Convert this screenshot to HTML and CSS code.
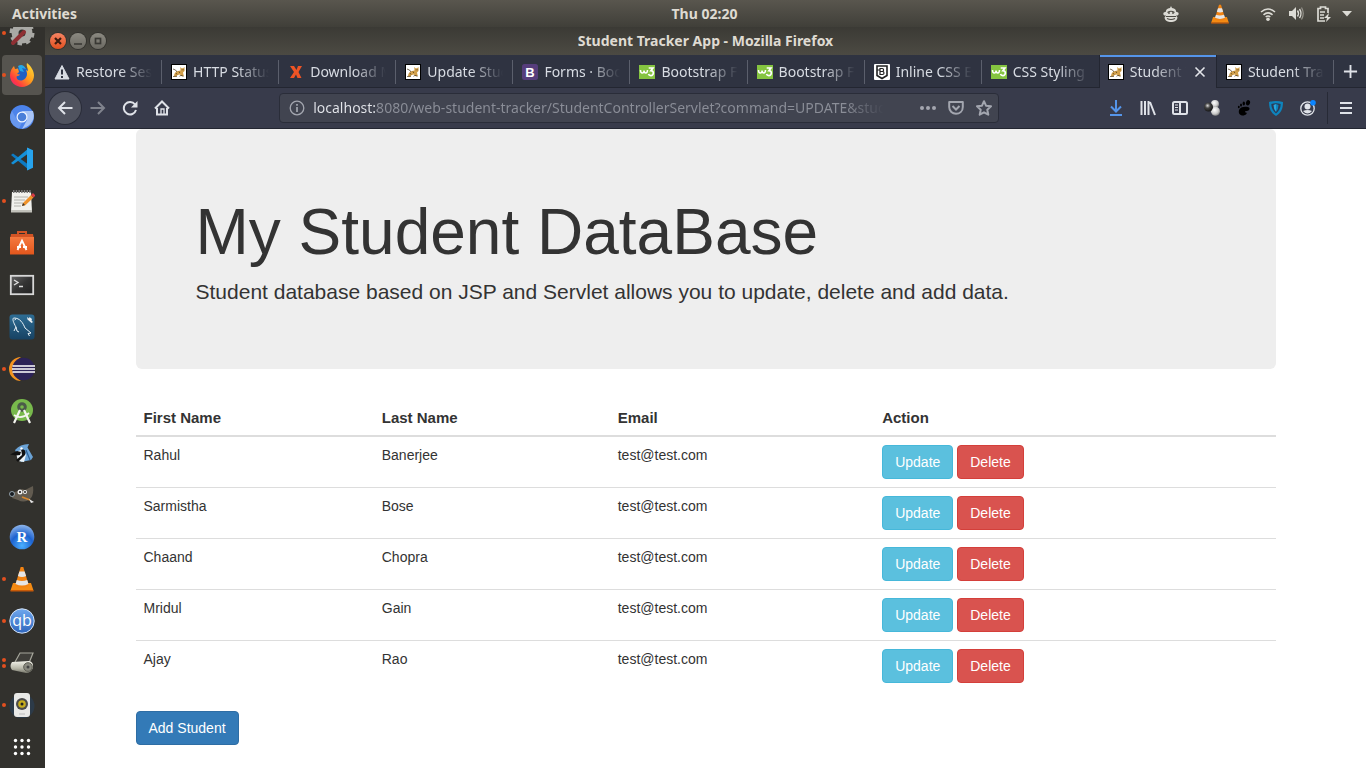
FILE: index.html
```html
<!DOCTYPE html>
<html lang="en">
<head>
<meta charset="utf-8">
<title>Student Tracker App</title>
<link rel="stylesheet" href="styles.css">
</head>
<body>
<svg class="defs" aria-hidden="true">
  <defs>
    <linearGradient id="ffOuter" x1="1" y1="0" x2="0" y2="1"><stop offset="0" stop-color="#ffe63c"/><stop offset=".45" stop-color="#ff9a1c"/><stop offset=".75" stop-color="#ff3d3f"/><stop offset="1" stop-color="#e8178a"/></linearGradient>
    <linearGradient id="orangeG" x1="0" y1="0" x2="0" y2="1"><stop offset="0" stop-color="#f5793f"/><stop offset="1" stop-color="#e2561c"/></linearGradient>
    <linearGradient id="termG" x1="0" y1="0" x2="1" y2="1"><stop offset="0" stop-color="#666"/><stop offset=".5" stop-color="#333"/><stop offset="1" stop-color="#222"/></linearGradient>
    <linearGradient id="blueG" x1="0" y1="0" x2="0" y2="1"><stop offset="0" stop-color="#2e6d94"/><stop offset="1" stop-color="#174263"/></linearGradient>
    <radialGradient id="rG" cx=".5" cy=".85" r=".9"><stop offset="0" stop-color="#4bb0ff"/><stop offset=".5" stop-color="#1d62cf"/><stop offset="1" stop-color="#9dc0ee"/></radialGradient>
    <linearGradient id="qbG" x1="0" y1="0" x2="0" y2="1"><stop offset="0" stop-color="#6fa8ee"/><stop offset="1" stop-color="#2f66bd"/></linearGradient>
    <linearGradient id="metal" x1="0" y1="0" x2="0" y2="1"><stop offset="0" stop-color="#f2f2ea"/><stop offset=".6" stop-color="#b9b9aa"/><stop offset="1" stop-color="#77776c"/></linearGradient>
    <radialGradient id="ballL" cx=".4" cy=".35" r=".7"><stop offset="0" stop-color="#fff"/><stop offset=".6" stop-color="#ccc"/><stop offset="1" stop-color="#777"/></radialGradient>
    <radialGradient id="ballD" cx=".4" cy=".35" r=".7"><stop offset="0" stop-color="#ddd"/><stop offset=".4" stop-color="#444"/><stop offset="1" stop-color="#111"/></radialGradient>
    <symbol id="tomcat" viewBox="0 0 16 16">
      <rect x=".5" y=".5" width="15" height="15" fill="#fff" stroke="#000"/>
      <path d="M3 12.500c0-3 1.500-5 4-5.500l2.500-.5-.3-3.500 1.300 1.200h1.500L13.500 3v4l-1.500 1.500.8 3.500-2.300.3L9 10.500l-2.500.5-1 1.500z" fill="#d3a04a"/>
      <path d="M2 12.500l4-.2M8.500 12.300l1.500-1 2.500 1M2 5l2.500 1L6 8M10.700 5.800h.9M12.300 5.800h.8M5 9l1 1.500M8 7.500l.8 1.500" stroke="#463418" stroke-width=".7" fill="none"/>
    </symbol>
    <symbol id="w3" viewBox="0 0 16 16">
      <rect y="1" width="16" height="14" fill="#85c440"/>
      <path d="M1.500 6q0 3 1.800 3T5 6.500Q5.200 9 6.800 9T8.500 6" fill="none" stroke="#fff" stroke-width="1.500"/>
      <path d="M9.700 4h4.200l-2 2.700c3.700.2 2.800 4.900-.1 4.900-1.300 0-2-.6-2.300-1.500" fill="none" stroke="#fff" stroke-width="1.700"/>
    </symbol>
    <symbol id="vlc" viewBox="0 0 26 26">
      <path d="M4 17h18l2.500 7.500h-23z" fill="#f48b13"/><path d="M1.500 24h23v1.500h-23z" fill="#c85a08"/>
      <path d="M11.700 1h2.600L20 20q-7 3.500-14 0z" fill="#f28312"/>
      <path d="M10.400 5.500h5.200l1.500 4.500q-4 2-8.200 0zM7.800 14q5 2 10.400 0l1.300 4q-6.500 3-13 0z" fill="#e5e5e5"/>
    </symbol>
  </defs>
</svg>

<div class="desktop">
  <header class="topbar">
    <button class="top-text">Activities</button>
    <time class="clock">Thu 02:20</time>
    <div class="tray">
      <svg class="tray-monkey" viewBox="0 0 18 18" width="18" height="18"><path d="M9 1l1 2c3 .3 4 2 4.300 4C17.500 6.500 17.500 11 14 10.500l1.500 2C15 16 12 17 9 17s-6-1-6.500-4.500l1.500-2C.5 11 .5 6.500 3.700 7 4 5 5 3.300 8 3z" fill="#dcdbd5"/><path d="M5.500 7.500q3.500-2.500 7 0M4 11.500h10M5 13.500q4 2 8 0" stroke="#4c4a43" stroke-width="1.200" fill="none"/><circle cx="7" cy="8" r=".9" fill="#4c4a43"/><circle cx="11" cy="8" r=".9" fill="#4c4a43"/></svg>
      <svg class="tray-vlc" width="20" height="20"><use href="#vlc"/></svg>
      <svg viewBox="0 0 16 16" width="16" height="16"><g fill="none" stroke="#dcdbd5" stroke-width="1.600"><path d="M1 6q7-6 14 0"/><path d="M3.500 8.800q4.500-4 9 0" /><path d="M5.700 11q2.300-2 4.600 0"/></g><circle cx="8" cy="13.200" r="1.800" fill="#dcdbd5"/></svg>
      <svg viewBox="0 0 16 16" width="16" height="16"><path d="M1 5h3l4-4v13l-4-4H1z" fill="#dcdbd5"/><path d="M9.500 4.500q2 3 0 6M11.500 3q3 4.500 0 9" stroke="#dcdbd5" stroke-width="1.400" fill="none"/><path d="M13.500 1.500q3.500 6 0 12" stroke="#96948c" stroke-width="1.200" fill="none"/></svg>
      <svg viewBox="0 0 16 16" width="16" height="16"><path d="M9 15H2V2.500h2.500V1h5v1.500H12V7" stroke="#dcdbd5" stroke-width="1.700" fill="none"/><path d="M4 6h5M4 9h4M4 12h4" stroke="#dcdbd5" stroke-width="1.500"/><path d="M13 7l-5 5h3l-1 4 5-5h-3z" fill="#dcdbd5"/></svg>
      <svg class="tray-caret" viewBox="0 0 10 6" width="10" height="6"><path d="M0 0h10L5 5.500z" fill="#dcdbd5"/></svg>
    </div>
  </header>

  <div class="workspace">
    <nav class="dock" aria-label="Dock">
      <button class="dock-item run" aria-label="Tweaks"><svg viewBox="0 0 26 26"><circle cx="13" cy="13" r="7" fill="none" stroke="#a9a9a5" stroke-width="7"/><circle cx="13" cy="13" r="10.500" fill="none" stroke="#a9a9a5" stroke-width="4" stroke-dasharray="4.200 4"/><path d="M4 23L15 12" stroke="#8e2f33" stroke-width="4" stroke-linecap="round"/></svg></button>
      <button class="dock-item run active" aria-label="Firefox"><svg viewBox="0 0 26 26"><circle cx="12.500" cy="14" r="9" fill="#1f5fc4"/><path d="M18 1c4 3 7 8 7 12.500C25 20 19.500 25 13 25S1 20 1 13.500C1 9 3 6 5 4l1 3 3-.5 1 3.500-2 2 3 .5c-1 2-3 1-3.500 2.500C8 19 12 19 14 18c4-2 5-6 3-10l2 1c0-3-2-5-1-8z" fill="url(#ffOuter)"/><path d="M9 4q5-3 8 3l-4-1 2 4-4-1z" fill="#23a7e8"/></svg></button>
      <button class="dock-item" aria-label="Chromium"><svg viewBox="0 0 26 26"><circle cx="13" cy="13" r="12" fill="#4c83ea"/><path d="M13 7h11q3 9-5 15l-6 3 5-9z" fill="#a9c5f6"/><path d="M3 7l5 9 5 2.500-3 6C2 22-1 14 3 7z" fill="#6898ef"/><circle cx="13" cy="13" r="5.500" fill="#f0f5ff"/><circle cx="13" cy="13" r="4.300" fill="#4a7fd9"/></svg></button>
      <button class="dock-item" aria-label="Visual Studio Code"><svg viewBox="0 0 26 26"><path d="M2 9l2-1.500L20 19v5z" fill="#0d7bc4"/><path d="M2 17l2 1.500L20 7V2z" fill="#1590d8"/><path d="M18 1.500l6 2.800v17.400l-6 2.800z" fill="#27a4ee"/></svg></button>
      <button class="dock-item run" aria-label="Text Editor"><svg viewBox="0 0 26 26"><path d="M3 4h19l1 20H2z" fill="#f1f1ed"/><path d="M2 22h21v2.500H2z" fill="#c2c2bb"/><path d="M4 3.500h18" stroke="#777" stroke-width="3" stroke-dasharray="1.500 1.200"/><path d="M5 9h14M5 12h11M5 15h9M5 18h7" stroke="#b2b2ac"/><path d="M13 18l1-3 8-8 2.500 2.500-8.500 8z" fill="#ef922a"/><path d="M22 7l2-2 2.500 2.500-2 2z" fill="#d73b45"/><path d="M13 18l1-3 2 2z" fill="#333"/></svg></button>
      <button class="dock-item" aria-label="Ubuntu Software"><svg viewBox="0 0 26 26"><path d="M9 5V2h8v3" fill="none" stroke="#d25526" stroke-width="2"/><path d="M2 4h22l1 5H1z" fill="#d25425"/><path d="M1 7h24v17.500H1z" fill="url(#orangeG)"/><path d="M8.500 20L13 10.500 17.500 20M8 17h4M14 17h4" stroke="#fff" stroke-width="1.800" fill="none"/></svg></button>
      <button class="dock-item" aria-label="Terminal"><svg viewBox="0 0 26 26"><rect x="1.800" y="3.800" width="22.400" height="18.400" fill="url(#termG)" stroke="#d8d8d8" stroke-width="1.800"/><path d="M5 8l4 2.500L5 13M10 14.500h4" stroke="#ddd" stroke-width="1.400" fill="none"/></svg></button>
      <button class="dock-item" aria-label="MySQL Workbench"><svg viewBox="0 0 26 26"><rect x=".5" y=".5" width="25" height="25" rx="3" fill="url(#blueG)"/><path d="M5 17l2-4C4 8 3 4 5 4c6 0 9 5 11 10 2 2 4 3 6 5l-3 .5 1.500 2.500M7 13l1 4 2 1M5.500 6L7 5" stroke="#e9f2f7" stroke-width="1" fill="none"/><path d="M18 3l2 1.500L20.500 3 23 5l-.5 1.500L24 8l-1.500 1-4-3.500z" fill="#e8edf0"/></svg></button>
      <button class="dock-item run" aria-label="Eclipse"><svg viewBox="0 0 26 26"><path d="M12 1a12 12 0 000 24A14 14 0 0112 1z" fill="#f39320"/><circle cx="14.500" cy="13" r="11.300" fill="#2c2257"/><path d="M3.500 10h22.500M3 13h23M3.500 16h22.500" stroke="#fff" stroke-width="1.500"/></svg></button>
      <button class="dock-item" aria-label="Android Studio"><svg viewBox="0 0 26 26"><circle cx="13" cy="12" r="11" fill="#78b94c"/><circle cx="13" cy="9" r="3.300" fill="none" stroke="#4b5b49" stroke-width="3"/><path d="M11 12L5 25M15 12l6 13" stroke="#f4f5ef" stroke-width="2.200"/><path d="M5 17q7 5 15-2" stroke="#f4f5ef" stroke-width="1.800" fill="none"/></svg></button>
      <button class="dock-item" aria-label="Bluejay"><svg viewBox="0 0 26 26"><path d="M6 10Q11 4 20 4l-1.500 3.500L24 17l-2 3-10 2z" fill="#6ba3d6"/><path d="M7 13q3-4 7-2l3 4-2 7-6-1z" fill="#edf3f7"/><path d="M1 14.500l7-3.500 4 1-1 3-4 .5zM12 9q6 0 4 6l-7 7-2-2 6-5z" fill="#111"/><circle cx="12.500" cy="8.500" r="1.200" fill="#fff"/><path d="M17 10l4 10" stroke="#2f5f92" stroke-width="1.200"/></svg></button>
      <button class="dock-item" aria-label="GIMP"><svg viewBox="0 0 26 26"><path d="M5 10l5-1 3-2 3 1 8-4q1 8-2 12-6 6-13 2l-6-2z" fill="#625b50"/><circle cx="11" cy="10" r="2.500" fill="#eee"/><circle cx="16" cy="10" r="2" fill="#eee"/><circle cx="11" cy="10" r="1" fill="#111"/><circle cx="16" cy="10" r=".9" fill="#111"/><circle cx="3" cy="12" r="2.500" fill="#171b20" stroke="#bfd2e0" stroke-width=".7"/><path d="M13 15l8 3" stroke="#d7872c" stroke-width="1.800"/><path d="M20 17l5 3-3 1z" fill="#e9e9e9"/></svg></button>
      <button class="dock-item" aria-label="RStudio"><svg viewBox="0 0 26 26"><circle cx="13" cy="13" r="12.300" fill="url(#rG)"/><text x="13" y="18" text-anchor="middle" class="glyph-r">R</text></svg></button>
      <button class="dock-item run" aria-label="VLC"><svg><use href="#vlc"/></svg></button>
      <button class="dock-item run" aria-label="qBittorrent"><svg viewBox="0 0 26 26"><circle cx="13" cy="13" r="12.200" fill="url(#qbG)" stroke="#d6e4f6" stroke-width="1"/><text x="13" y="18" text-anchor="middle" class="glyph-qb">qb</text></svg></button>
      <button class="dock-item run two" aria-label="Scanner"><svg viewBox="0 0 26 26"><path d="M6 12l5-9h13l-4 10" fill="#3f3e3a" stroke="#a6a69b" stroke-width="1.200"/><path d="M3 12l17-1q5 1 4 7-2 5-7 5L3 20q-3-4 0-8z" fill="url(#metal)"/><circle cx="19" cy="17" r="4.300" fill="#8a8a80" stroke="#5d5d54"/><circle cx="19" cy="17" r="1.500" fill="#444"/></svg></button>
      <button class="dock-item run" aria-label="Sound"><svg viewBox="0 0 26 26"><circle cx="13" cy="14" r="12.500" fill="#2c3a48"/><rect x="5" y="1" width="16" height="24" rx="3" fill="#e9e9e7"/><circle cx="13" cy="12" r="6" fill="#4b4b4b"/><circle cx="13" cy="12" r="3.800" fill="#c6ad1d"/><circle cx="13" cy="12" r="1.500" fill="#222"/><path d="M10 22h6" stroke="#bbb"/></svg></button>
      <button class="dock-item" aria-label="Show Applications"><svg viewBox="0 0 26 26"><g fill="#fff"><circle cx="6.500" cy="6.500" r="1.700"/><circle cx="13" cy="6.500" r="1.700"/><circle cx="19.500" cy="6.500" r="1.700"/><circle cx="6.500" cy="13" r="1.700"/><circle cx="13" cy="13" r="1.700"/><circle cx="19.500" cy="13" r="1.700"/><circle cx="6.500" cy="19.500" r="1.700"/><circle cx="13" cy="19.500" r="1.700"/><circle cx="19.500" cy="19.500" r="1.700"/></g></svg></button>
    </nav>

    <section class="window">
      <div class="titlebar">
        <div class="win-buttons">
          <button class="win-btn close" aria-label="Close"><svg viewBox="0 0 16 16"><path d="M5 5l6 6M11 5l-6 6" stroke="#3d1c10" stroke-width="2.200"/></svg></button>
          <button class="win-btn" aria-label="Minimize"><svg viewBox="0 0 16 16"><path d="M4 11h8" stroke="#3a3935" stroke-width="1.600"/></svg></button>
          <button class="win-btn" aria-label="Maximize"><svg viewBox="0 0 16 16"><rect x="5.500" y="5.500" width="5" height="5" fill="none" stroke="#3a3935" stroke-width="1.700"/></svg></button>
        </div>
        <span class="win-title">Student Tracker App - Mozilla Firefox</span>
      </div>

      <div class="tabs">
        <button class="tab"><svg class="fav" viewBox="0 0 16 16"><path d="M8 1.500L15 15H1z" fill="#d8dce3" stroke="#d8dce3" stroke-linejoin="round"/><path d="M8 5.500v5M8 12v2" stroke="#2f3341" stroke-width="2"/></svg><span class="tab-label">Restore Session</span></button>
        <button class="tab"><svg class="fav"><use href="#tomcat"/></svg><span class="tab-label">HTTP Status 404</span></button>
        <button class="tab"><svg class="fav" viewBox="0 0 16 16"><path d="M2 2h4l2.500 4L10 2h4l-3.500 6 3 6h-4L8 10.500 6 14H2l4-6z" fill="#ee5425"/></svg><span class="tab-label">Download MySQL</span></button>
        <button class="tab"><svg class="fav"><use href="#tomcat"/></svg><span class="tab-label">Update Student</span></button>
        <button class="tab"><svg class="fav" viewBox="0 0 16 16"><rect width="16" height="16" rx="2.500" fill="#563d7c"/><text x="8" y="12.500" text-anchor="middle" class="glyph-b">B</text></svg><span class="tab-label">Forms · Bootstrap</span></button>
        <button class="tab"><svg class="fav"><use href="#w3"/></svg><span class="tab-label">Bootstrap Forms</span></button>
        <button class="tab"><svg class="fav"><use href="#w3"/></svg><span class="tab-label">Bootstrap Forms</span></button>
        <button class="tab"><svg class="fav" viewBox="0 0 16 16"><rect width="16" height="16" rx="1" fill="#fff"/><path d="M3 2h10v9.500L8 14.500l-5-3z" fill="none" stroke="#222" stroke-width="1.600"/><path d="M3 6h3M6 4.500v6h2.500c2 0 2-3 0-3H6h2.300c1.700 0 1.700-3 0-3z" fill="none" stroke="#222" stroke-width="1.200"/></svg><span class="tab-label">Inline CSS Email</span></button>
        <button class="tab last-before"><svg class="fav"><use href="#w3"/></svg><span class="tab-label">CSS Styling Im</span></button>
        <div class="tab current"><svg class="fav"><use href="#tomcat"/></svg><span class="tab-label">Student Tracker</span><button class="tab-close" aria-label="Close tab"><svg viewBox="0 0 12 12"><path d="M1.500 1.500l9 9M10.500 1.500l-9 9" stroke="#e3e5ea" stroke-width="1.600"/></svg></button></div>
        <button class="tab"><svg class="fav"><use href="#tomcat"/></svg><span class="tab-label">Student Tracker</span></button>
        <button class="new-tab" aria-label="New tab"><svg viewBox="0 0 16 16"><path d="M8 1v14M1 8h14" stroke="#dfe2e8" stroke-width="2"/></svg></button>
      </div>

      <div class="toolbar">
        <div class="tools">
          <button class="tool back" aria-label="Back"><svg viewBox="0 0 16 16"><path d="M15.500 8H1.500M8 2L2 8l6 6" class="ln"/></svg></button>
          <button class="tool dim" aria-label="Forward"><svg viewBox="0 0 16 16"><path d="M.5 8h14M8 2l6 6-6 6" class="ln"/></svg></button>
          <button class="tool" aria-label="Reload"><svg viewBox="0 0 16 16"><path d="M13 4.500A6.200 6.200 0 1 0 14 10" class="ln"/><path d="M15.500 1v6.500H9z" fill="#dfe2e8"/></svg></button>
          <button class="tool" aria-label="Home"><svg viewBox="0 0 16 16"><path d="M1 8.500L8 1.500l7 7M3 8v6.500h10V8" class="ln"/><path d="M7 14.500V9h3v5.500" class="ln thin"/></svg></button>
        </div>
        <div class="spring"></div>
        <div class="urlbar">
          <svg viewBox="0 0 16 16"><circle cx="8" cy="8" r="6.800" class="ln thin"/><path d="M8 4v1.800M8 7v5" stroke="#a3a6af" stroke-width="1.700"/></svg>
          <input class="url" type="text" aria-label="Address" value="localhost:8080/web-student-tracker/StudentControllerServlet?command=UPDATE&amp;studentId=1">
          <button class="url-btn" aria-label="Page actions"><svg viewBox="0 0 16 16"><g fill="#a3a6af"><circle cx="2" cy="8" r="2"/><circle cx="8" cy="8" r="2"/><circle cx="14" cy="8" r="2"/></g></svg></button>
          <button class="url-btn" aria-label="Pocket"><svg viewBox="0 0 16 16"><path d="M1.200 2h13.600v5c0 9-13.600 9-13.600 0z" class="ln" stroke-linejoin="round"/><path d="M4.500 6L8 9.500 11.500 6" class="ln"/></svg></button>
          <button class="url-btn" aria-label="Bookmark"><svg viewBox="0 0 16 16"><path d="M8 1.200l2 4.500 5 .6-3.700 3.400 1 5L8 12.300l-4.300 2.400 1-5L1 6.300l5-.6z" class="ln" stroke-linejoin="round"/></svg></button>
        </div>
        <div class="spring"></div>
        <div class="tools">
          <button class="tool" aria-label="Downloads"><svg viewBox="0 0 16 16"><path d="M8 0v11M3 6.500l5 5 5-5M2 15h12" fill="none" stroke="#5595ea" stroke-width="2"/></svg></button>
          <button class="tool" aria-label="Library"><svg viewBox="0 0 16 16"><path d="M1.500 1v14M5 1v14M8.500 1v14M10 2l5 13" class="ln"/></svg></button>
          <button class="tool" aria-label="Sidebars"><svg viewBox="0 0 16 16"><rect x="1" y="2" width="14" height="12" rx="1.500" class="ln"/><path d="M8 2v12" class="ln"/><path d="M3 5h3M3 7.500h3M3 10h3" stroke="#dfe2e8"/></svg></button>
          <button class="tool" aria-label="Molecule"><svg viewBox="0 0 16 16"><circle cx="11" cy="4" r="4" fill="url(#ballL)"/><circle cx="11.500" cy="11.300" r="4.500" fill="url(#ballL)"/><circle cx="4.500" cy="7" r="4.500" fill="url(#ballD)"/></svg></button>
          <button class="tool" aria-label="GNOME Shell"><svg viewBox="0 0 16 16"><path d="M3 10c1-3 5-4 9-3 3 1 1 4-1 4-2-.5-3 1-1 1.500 2 .5-.5 3-3 3S2 14 3 10z"/><ellipse cx="12" cy="2.800" rx="2" ry="2.700" transform="rotate(20 12 2.800)"/><ellipse cx="7.800" cy="3.500" rx="1.200" ry="1.900"/><ellipse cx="5" cy="5" rx="1" ry="1.600"/><ellipse cx="2.800" cy="7" rx=".9" ry="1.300"/></svg></button>
          <button class="tool" aria-label="Shield"><svg viewBox="0 0 16 16"><path d="M1 2q7-2 14 0c0 7-2 11-7 14C3 13 1 9 1 2z" fill="#0d84bd"/><path d="M3.300 4q4.700-1.500 9.400 0c0 4-1.700 7-4.700 9.500C5 11 3.300 8 3.300 4z" fill="#2d3b55"/><path d="M5.500 5L8 4v8Q5.500 9 5.500 5z" fill="#29a6dd"/><path d="M8 4l2.500 1Q10.500 9 8 12z" fill="#0d84bd"/></svg></button>
          <button class="tool" aria-label="Account"><svg viewBox="0 0 16 16"><circle cx="7.500" cy="8.500" r="6.700" class="ln thin"/><circle cx="7.500" cy="6.500" r="3" fill="#dfe2e8"/><path d="M3 11q4.500-2 9 0-4.500 5-9 0z" fill="#dfe2e8"/><circle cx="13" cy="2.800" r="2.800" fill="#0a84ff"/></svg></button>
        </div>
        <button class="tool menu" aria-label="Menu"><svg viewBox="0 0 16 16"><path d="M2 3h12M2 8h12M2 13h12" class="ln"/></svg></button>
      </div>

      <main class="page">
        <div class="container">
          <div class="jumbotron">
            <h1>My Student DataBase</h1>
            <p>Student database based on JSP and Servlet allows you to update, delete and add data.</p>
          </div>
          <table class="table">
            <colgroup><col class="c-first"><col class="c-last"><col class="c-email"><col></colgroup>
            <thead><tr><th>First Name</th><th>Last Name</th><th>Email</th><th>Action</th></tr></thead>
            <tbody>
              <tr><td>Rahul</td><td>Banerjee</td><td>test@test.com</td><td class="actions"><button class="btn info">Update</button> <button class="btn danger">Delete</button></td></tr>
              <tr><td>Sarmistha</td><td>Bose</td><td>test@test.com</td><td class="actions"><button class="btn info">Update</button> <button class="btn danger">Delete</button></td></tr>
              <tr><td>Chaand</td><td>Chopra</td><td>test@test.com</td><td class="actions"><button class="btn info">Update</button> <button class="btn danger">Delete</button></td></tr>
              <tr><td>Mridul</td><td>Gain</td><td>test@test.com</td><td class="actions"><button class="btn info">Update</button> <button class="btn danger">Delete</button></td></tr>
              <tr><td>Ajay</td><td>Rao</td><td>test@test.com</td><td class="actions"><button class="btn info">Update</button> <button class="btn danger">Delete</button></td></tr>
            </tbody>
          </table>
          <button class="btn primary">Add Student</button>
        </div>
      </main>
    </section>
  </div>
</div>
</body>
</html>
```
FILE: styles.css
```css
* { box-sizing: border-box; }
body { margin: 0; font-family: "Noto Sans", "Open Sans", sans-serif; font-size: 14px; }
button { font: inherit; color: inherit; border: 0; padding: 0; background: none; }
svg { display: block; flex: none; }
.defs { position: absolute; width: 0; height: 0; }

.desktop { height: 100vh; display: flex; flex-direction: column; overflow: hidden; }

/* Desktop top bar: the clock is centred over the area right of the dock */
.topbar {
  flex: none; height: 27px; padding: 0 14px 0 12px;
  display: grid; grid-template-columns: 45px 1fr auto 1fr; align-items: center;
  background: linear-gradient(#59564e, #403f39);
  color: #dfdbd2; font-weight: 700; font-size: 14px; line-height: 20px;
}
.top-text { justify-self: start; grid-column: 1 / span 2; }
.tray { justify-self: end; display: flex; align-items: center; gap: 12px; }
.tray-vlc { margin: 0 18px; }
.tray-caret { margin-left: -2px; }

.workspace { flex: 1; min-height: 0; display: flex; }

/* Dock */
.dock {
  flex: none; width: 45px; background: #32312d;
  display: flex; flex-direction: column; justify-content: flex-end; overflow: hidden;
}
.dock-item {
  flex: none; position: relative; width: 40px; height: 40px; margin: 1px 0 1px 2px;
  border-radius: 4px; display: flex; align-items: center; justify-content: center;
}
.dock-item svg { width: 26px; height: 26px; }
.dock-item.active { background: #56544f; }
.dock-item.run::before {
  content: ""; position: absolute; left: 0; top: 18px; width: 4px; height: 4px;
  border-radius: 50%; background: #e3501f;
}
.dock-item.two::before { top: 15px; box-shadow: 0 6px #e3501f; }
.glyph-r { font: 700 15px "Liberation Serif", serif; fill: #fff; }
.glyph-qb { font: 16px "Open Sans", sans-serif; fill: #fff; }
.glyph-b { font: 700 13px "Liberation Sans", sans-serif; fill: #fff; }

/* Browser window */
.window { flex: 1; min-width: 0; display: flex; flex-direction: column; }
.titlebar {
  flex: none; height: 28px; padding: 0 5px;
  display: grid; grid-template-columns: 1fr auto 1fr; align-items: center;
  background: linear-gradient(#3b3a35, #4c4a43);
  color: #dfdbd2; font-weight: 700; font-size: 14px; line-height: 20px;
}
.win-buttons { display: flex; gap: 4px; }
.win-btn {
  width: 16px; height: 16px; border-radius: 50%;
  background: linear-gradient(#8b8981, #6b6962); box-shadow: 0 0 0 1px #33322e;
}
.win-btn.close { background: linear-gradient(#f68463, #e2501f); }

.tabs { flex: none; height: 33px; display: flex; background: #2f3341; color: #d8dce3; }
.tab {
  flex: 1; min-width: 0; padding: 1px 10px 0 9px; position: relative;
  display: flex; align-items: center; gap: 6px; text-align: left;
  border-bottom: 1px solid #232631;
}
.tab::after {
  content: ""; position: absolute; right: 0; top: 5px; bottom: 3px; width: 1px; background: #5b5f6c;
}
.tab.current::after, .tab.last-before::after { display: none; }
.fav { width: 16px; height: 16px; }
.tab-label {
  flex: 1; min-width: 0; overflow: hidden; white-space: nowrap; line-height: 20px;
  -webkit-mask-image: linear-gradient(to left, transparent, #000 32px);
  mask-image: linear-gradient(to left, transparent, #000 32px);
}
.tab.current {
  background: #383b4b; border: solid #232631; border-width: 0 1px;
  box-shadow: inset 0 2px #5595ea; padding-left: 8px;
}
.tab-close { width: 12px; height: 12px; margin-left: 2px; }
.new-tab { width: 32px; display: grid; place-items: center; border-bottom: 1px solid #232631; }
.new-tab svg { width: 15px; height: 15px; }

.toolbar {
  flex: none; height: 41px; padding: 0 2px 0 4px; display: flex; align-items: center;
  background: #383b4b; border-bottom: 1px solid #232631; color: #dfe2e8;
}
.tools { display: flex; align-items: center; }
.tool { width: 32px; height: 32px; display: grid; place-items: center; }
.tool svg, .urlbar svg { width: 16px; height: 16px; }
.ln { fill: none; stroke: currentColor; stroke-width: 2; }
.ln.thin { stroke-width: 1.3; }
.tool.back { background: #50535f; border-radius: 50%; box-shadow: 0 0 0 1px #2a2d39; }
.tool.dim { color: #80838d; margin-left: 1px; }
.spring { flex: 1; }
.urlbar {
  flex: 7; min-width: 0; height: 30px; padding: 0 0 0 9px;
  display: flex; align-items: center;
  background: #414450; border: 1px solid #2a2d39; border-radius: 4px; color: #a3a6af;
}
.url {
  flex: 1; min-width: 0; border: 0; outline: 0; padding: 0; margin: 0 30px 0 8px;
  font: 14px/20px "Noto Sans", "Open Sans", sans-serif;
  color: transparent;
  background: linear-gradient(to right, #e4e6eb 64px, #8b8e98 64px);
  -webkit-background-clip: text; background-clip: text;
  -webkit-mask-image: linear-gradient(to left, transparent, #000 40px);
  mask-image: linear-gradient(to left, transparent, #000 40px);
}
.url-btn { width: 28px; height: 28px; display: grid; place-items: center; }
.tool.menu { margin-left: 3px; width: 37px; height: 32px; border-left: 1px solid #272a36; }

/* Web page */
.page {
  flex: 1; min-height: 0; overflow: hidden; background: #fff; color: #333;
  font: 14px/20px "Liberation Sans", Arial, sans-serif;
}
.container { max-width: 1140px; margin: 0 auto; }
.jumbotron { background: #eee; border-radius: 6px; padding: 48px 60px; margin-bottom: 30px; }
.jumbotron h1 { margin: 0; padding-top: 20px; font-size: 64px; line-height: 70px; font-weight: 400; }
.jumbotron p { margin: 10px 0 15px; font-size: 21px; line-height: 29px; }
.table { width: 100%; table-layout: fixed; border-collapse: collapse; margin-bottom: 20px; }
.c-first { width: 20.9%; }
.c-last { width: 20.7%; }
.c-email { width: 23.2%; }
.table th { padding: 9px 8px 7px; text-align: left; font-size: 15px; font-weight: 700; border-bottom: 2px solid #ddd; }
.table td { padding: 8px; vertical-align: top; border-top: 1px solid #ddd; }
.btn {
  padding: 6px 12px; border: 1px solid; border-radius: 4px; color: #fff;
  font: 14px/20px "Liberation Sans", Arial, sans-serif; vertical-align: top;
}
.info { background: #5bc0de; border-color: #46b8da; }
.danger { background: #d9534f; border-color: #d43f3a; }
.primary { background: #337ab7; border-color: #2e6da4; }
```
